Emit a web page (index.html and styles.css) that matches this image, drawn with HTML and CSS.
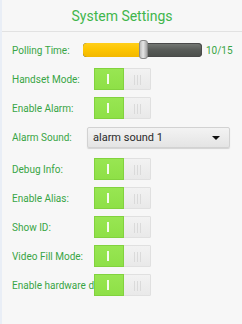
FILE: index.html
```html
<!DOCTYPE html>
<html lang="en">
<head>
    <meta charset="UTF-8">
    <meta name="viewport" content="width=device-width, initial-scale=1.0">
    <title>System Settings</title>
    <link rel="stylesheet" href="styles.css">
</head>
<body>
    <div class="page">
        <div class="header">System Settings</div>

        <div class="settings">
            <div class="row">
                <label class="label label-slider">Polling Time:</label>
                <div class="slider">
                    <div class="slider-fill" style="width: 58px"></div>
                    <div class="slider-thumb" style="left: 56px"></div>
                </div>
                <span class="slider-value">10/15</span>
            </div>

            <div class="row">
                <label class="label">Handset Mode:</label>
                <div class="toggle"><span class="toggle-on"></span><span class="toggle-off"></span></div>
            </div>

            <div class="row">
                <label class="label">Enable Alarm:</label>
                <div class="toggle"><span class="toggle-on"></span><span class="toggle-off"></span></div>
            </div>

            <div class="row row-select">
                <label class="label label-select">Alarm Sound:</label>
                <div class="select">
                    <span>alarm sound 1</span>
                    <span class="select-arrow"></span>
                </div>
            </div>

            <div class="row">
                <label class="label">Debug Info:</label>
                <div class="toggle"><span class="toggle-on"></span><span class="toggle-off"></span></div>
            </div>

            <div class="row">
                <label class="label">Enable Alias:</label>
                <div class="toggle"><span class="toggle-on"></span><span class="toggle-off"></span></div>
            </div>

            <div class="row">
                <label class="label">Show ID:</label>
                <div class="toggle"><span class="toggle-on"></span><span class="toggle-off"></span></div>
            </div>

            <div class="row">
                <label class="label">Video Fill Mode:</label>
                <div class="toggle"><span class="toggle-on"></span><span class="toggle-off"></span></div>
            </div>

            <div class="row">
                <label class="label">Enable hardware decoding:</label>
                <div class="toggle"><span class="toggle-on"></span><span class="toggle-off"></span></div>
            </div>
        </div>
    </div>
</body>
</html>
```

FILE: styles.css
```css
html, body {
    margin: 0;
    padding: 0;
    height: 100%;
}

body {
    font-family: Roboto, "Liberation Sans", sans-serif;
    background-color: #f7f7f7;
}

.page {
    min-height: 100%;
    border-left: 2px solid #e9eef6;
    box-sizing: border-box;
}

.header {
    height: 31px;
    line-height: 32px;
    text-align: center;
    font-size: 14px;
    color: #3fb64c;
    border-bottom: 1px solid #e2e2e2;
}

.settings {
    display: flex;
    flex-direction: column;
    gap: 7px;
    padding: 7px 0 0 10px;
}

.row {
    display: flex;
    align-items: center;
    height: 22px;
}

.row-select {
    height: 25px;
    align-items: flex-start;
    padding-top: 1px;
    box-sizing: border-box;
}

.label {
    flex: none;
    width: 82px;
    font-size: 10px;
    color: #37a545;
    white-space: nowrap;
    overflow: hidden;
}

.label-slider {
    width: 71px;
}

.label-select {
    width: 75px;
    line-height: 21px;
}

/* slider */
.slider {
    position: relative;
    width: 119px;
    height: 14px;
    border-radius: 4px;
    background: linear-gradient(#777b77, #585b58 50%, #4b4e4b);
    box-shadow: inset 0 0 0 1px #4a4a4a;
}

.slider-fill {
    height: 100%;
    border-radius: 4px 0 0 4px;
    background: linear-gradient(#ffcf1a, #fcc400 50%, #f2b800);
}

.slider-thumb {
    position: absolute;
    top: -3px;
    width: 9px;
    height: 19px;
    border-radius: 3px;
    background: linear-gradient(to right, #b9b9b9, #e6e6e6 45%, #a5a5a5);
    border: 1px solid #8a8a8a;
    box-sizing: border-box;
}

.slider-value {
    margin-left: 4px;
    font-size: 10px;
    color: #37a545;
}

/* toggle */
.toggle {
    display: flex;
    width: 57px;
    height: 22px;
    box-sizing: border-box;
    border: 1px solid #e0e0e0;
    border-radius: 1px;
}

.toggle-on {
    position: relative;
    width: 28px;
    background: linear-gradient(#98e652, #8ee047);
    border: 1px solid #82d23e;
    margin: -1px 0 -1px -1px;
}

.toggle-on::after {
    content: "";
    position: absolute;
    left: 12px;
    top: 5px;
    width: 2px;
    height: 10px;
    background: #f6fcee;
}

.toggle-off {
    flex: 1;
    background-image:
        linear-gradient(#dadada, #dadada),
        linear-gradient(#dadada, #dadada),
        linear-gradient(#dadada, #dadada),
        linear-gradient(#f2f2f2, #e9e9e9);
    background-size: 1px 10px, 1px 10px, 1px 10px, 100% 100%;
    background-position: 10px 6px, 13px 6px, 16px 6px, 0 0;
    background-repeat: no-repeat;
}

/* dropdown */
.select {
    display: flex;
    align-items: center;
    justify-content: space-between;
    width: 143px;
    height: 21px;
    box-sizing: border-box;
    padding: 0 9px 0 5px;
    font-size: 11px;
    color: #2a2a2a;
    background: linear-gradient(#f3f3f3, #e4e4e4);
    border: 1px solid #d2d2d2;
    border-radius: 2px;
    box-shadow: 0 1px 1px rgba(0,0,0,0.15);
}

.select-arrow {
    width: 0;
    height: 0;
    border-left: 4px solid transparent;
    border-right: 4px solid transparent;
    border-top: 4px solid #111;
}
```
